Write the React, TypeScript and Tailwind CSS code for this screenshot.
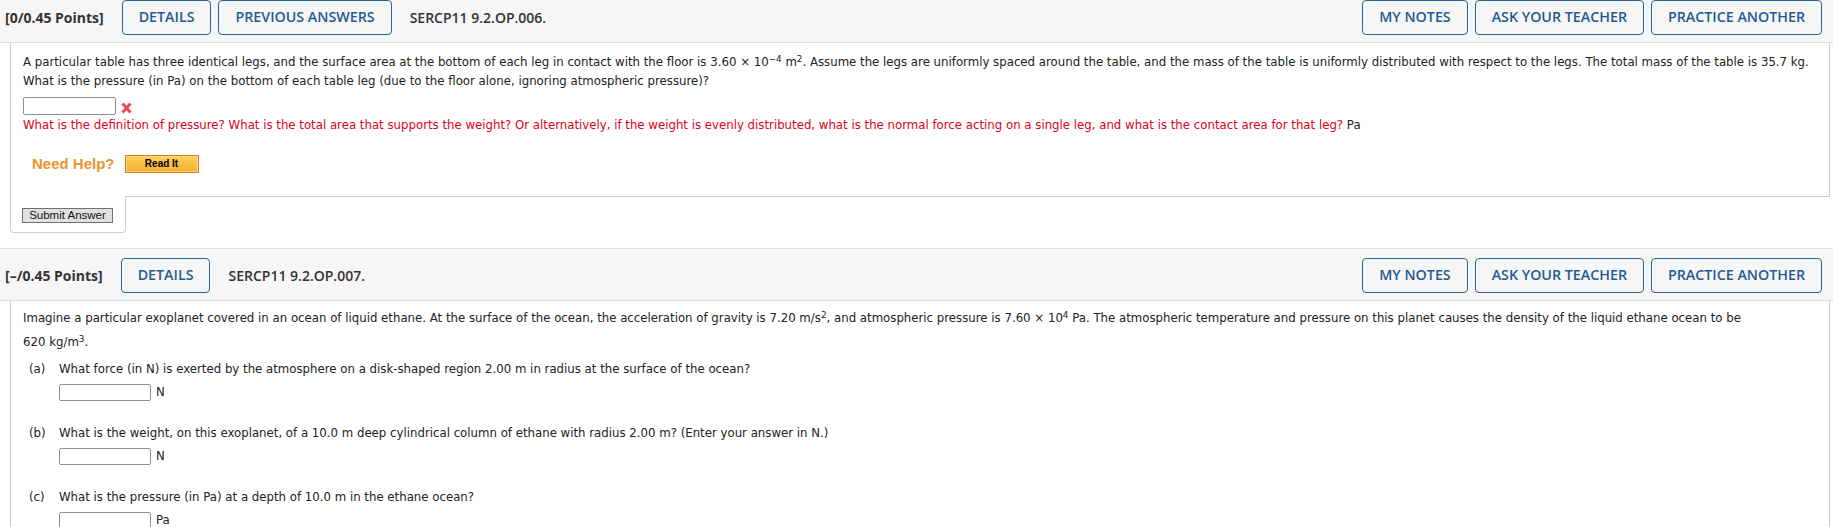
import type { ReactNode } from 'react';

function HeaderButton({ children }: { children: ReactNode }) {
  return (
    <button className="h-[35px] px-4 rounded-[4px] border border-[#2a6496] text-[14.25px] font-semibold uppercase text-[#1f5b92] leading-none">
      {children}
    </button>
  );
}

function QuestionHeader({ points, code, previous }: { points: string; code: string; previous?: boolean }) {
  return (
    <div className="flex items-center border-y border-[#dedede] bg-[#f6f6f6] pl-[5px] pr-[11px] pt-[9px] pb-[7px] font-['Open_Sans',sans-serif]">
      <span className="mr-[18px] text-[14px] font-bold text-[#333]">{points}</span>
      <div className="flex gap-[7px]">
        <HeaderButton>Details</HeaderButton>
        {previous && <HeaderButton>Previous Answers</HeaderButton>}
      </div>
      <span className="ml-[18px] text-[14px] font-semibold text-[#333]">{code}</span>
      <div className="ml-auto flex gap-[7px]">
        <HeaderButton>My Notes</HeaderButton>
        <HeaderButton>Ask Your Teacher</HeaderButton>
        <HeaderButton>Practice Another</HeaderButton>
      </div>
    </div>
  );
}

function AnswerBox({ unit }: { unit: string }) {
  return (
    <div className="mt-[5px] ml-[30px] flex h-[17px] items-center gap-[5px] leading-[17px]">
      <input className="w-[92px] h-[17px] border border-[#8f8f8f] rounded-[2px] bg-white" />
      <span>{unit}</span>
    </div>
  );
}

function Part({ label, children, unit }: { label: string; children: ReactNode; unit: string }) {
  return (
    <div className="mb-[23px]">
      <div className="flex">
        <span className="w-[30px] shrink-0">{label}</span>
        <span>{children}</span>
      </div>
      <AnswerBox unit={unit} />
    </div>
  );
}

export default function App() {
  return (
    <div className="min-h-screen bg-white -mt-[10px] text-[#222]">
      <QuestionHeader points="[0/0.45 Points]" code="SERCP11 9.2.OP.006." previous />

      {/* question 1 */}
      <div className="ml-[10px] mr-[3px] border-x border-b border-[#cfcfcf] px-3 pt-[10px] pb-[23px] font-['DejaVu_Sans',sans-serif] text-[11.75px] leading-[19px]">
        <p>
          A particular table has three identical legs, and the surface area at the bottom of each leg in contact with the floor is 3.60 × 10<sup>−4</sup> m<sup>2</sup>. Assume the legs are uniformly spaced around the table, and the mass of the table is uniformly distributed with respect to the legs. The total mass of the table is 35.7 kg.
          <br />
          What is the pressure (in Pa) on the bottom of each table leg (due to the floor alone, ignoring atmospheric pressure)?
        </p>
        <div className="mt-[6px] flex items-end gap-[5px]">
          <input className="w-[93px] h-[18px] border border-[#8f8f8f] rounded-[2px] bg-white" />
          <svg width="11" height="12" viewBox="0 0 11 12" className="mb-[1px]">
            <path d="M1.5 1.5 L9.5 10.5 M9.5 1.5 L1.5 10.5" stroke="#ee4b55" strokeWidth="3" />
          </svg>
        </div>
        <p className="mt-px text-[#e2001a]">
          What is the definition of pressure? What is the total area that supports the weight? Or alternatively, if the weight is evenly distributed, what is the normal force acting on a single leg, and what is the contact area for that leg? <span className="text-[#222]">Pa</span>
        </p>
        <div className="mt-[19px] ml-[9px] flex items-center gap-[10px] font-['Liberation_Sans',sans-serif]">
          <span className="text-[15px] font-bold text-[#f2922a]">Need Help?</span>
          <button className="w-[74px] h-[18px] border border-[#d07c25] bg-linear-to-b from-[#ffd05a] to-[#f8ad2c] shadow-[inset_0_0_0_1px_#fcd98a] text-[10px] font-bold text-black leading-none">
            Read It
          </button>
        </div>
      </div>
      <div className="relative ml-[10px] -mt-px w-[116px] bg-white border-x border-b border-[#cfcfcf] rounded-b-[4px] pl-[11px] pt-[12px] pb-[9px]">
        <button className="block w-[91px] h-[15px] border border-[#707070] bg-[#e1e1e1] font-['Liberation_Sans',sans-serif] text-[11.5px] text-[#111] leading-none">
          Submit Answer
        </button>
      </div>

      <div className="mt-[15px]">
        <QuestionHeader points="[–/0.45 Points]" code="SERCP11 9.2.OP.007." />
      </div>

      {/* question 2 */}
      <div className="ml-[10px] mr-[3px] border-x border-[#cfcfcf] px-3 pt-[5px] font-['DejaVu_Sans',sans-serif] text-[11.75px]">
        <p className="leading-[24px]">
          Imagine a particular exoplanet covered in an ocean of liquid ethane. At the surface of the ocean, the acceleration of gravity is 7.20 m/s<sup>2</sup>, and atmospheric pressure is 7.60 × 10<sup>4</sup> Pa. The atmospheric temperature and pressure on this planet causes the density of the liquid ethane ocean to be
          <br />
          620 kg/m<sup>3</sup>.
        </p>
        <div className="mt-[6px] ml-[6px] leading-[19px]">
          <Part label="(a)" unit="N">
            What force (in N) is exerted by the atmosphere on a disk-shaped region 2.00 m in radius at the surface of the ocean?
          </Part>
          <Part label="(b)" unit="N">
            What is the weight, on this exoplanet, of a 10.0 m deep cylindrical column of ethane with radius 2.00 m? (Enter your answer in N.)
          </Part>
          <Part label="(c)" unit="Pa">
            What is the pressure (in Pa) at a depth of 10.0 m in the ethane ocean?
          </Part>
        </div>
      </div>
    </div>
  );
}
